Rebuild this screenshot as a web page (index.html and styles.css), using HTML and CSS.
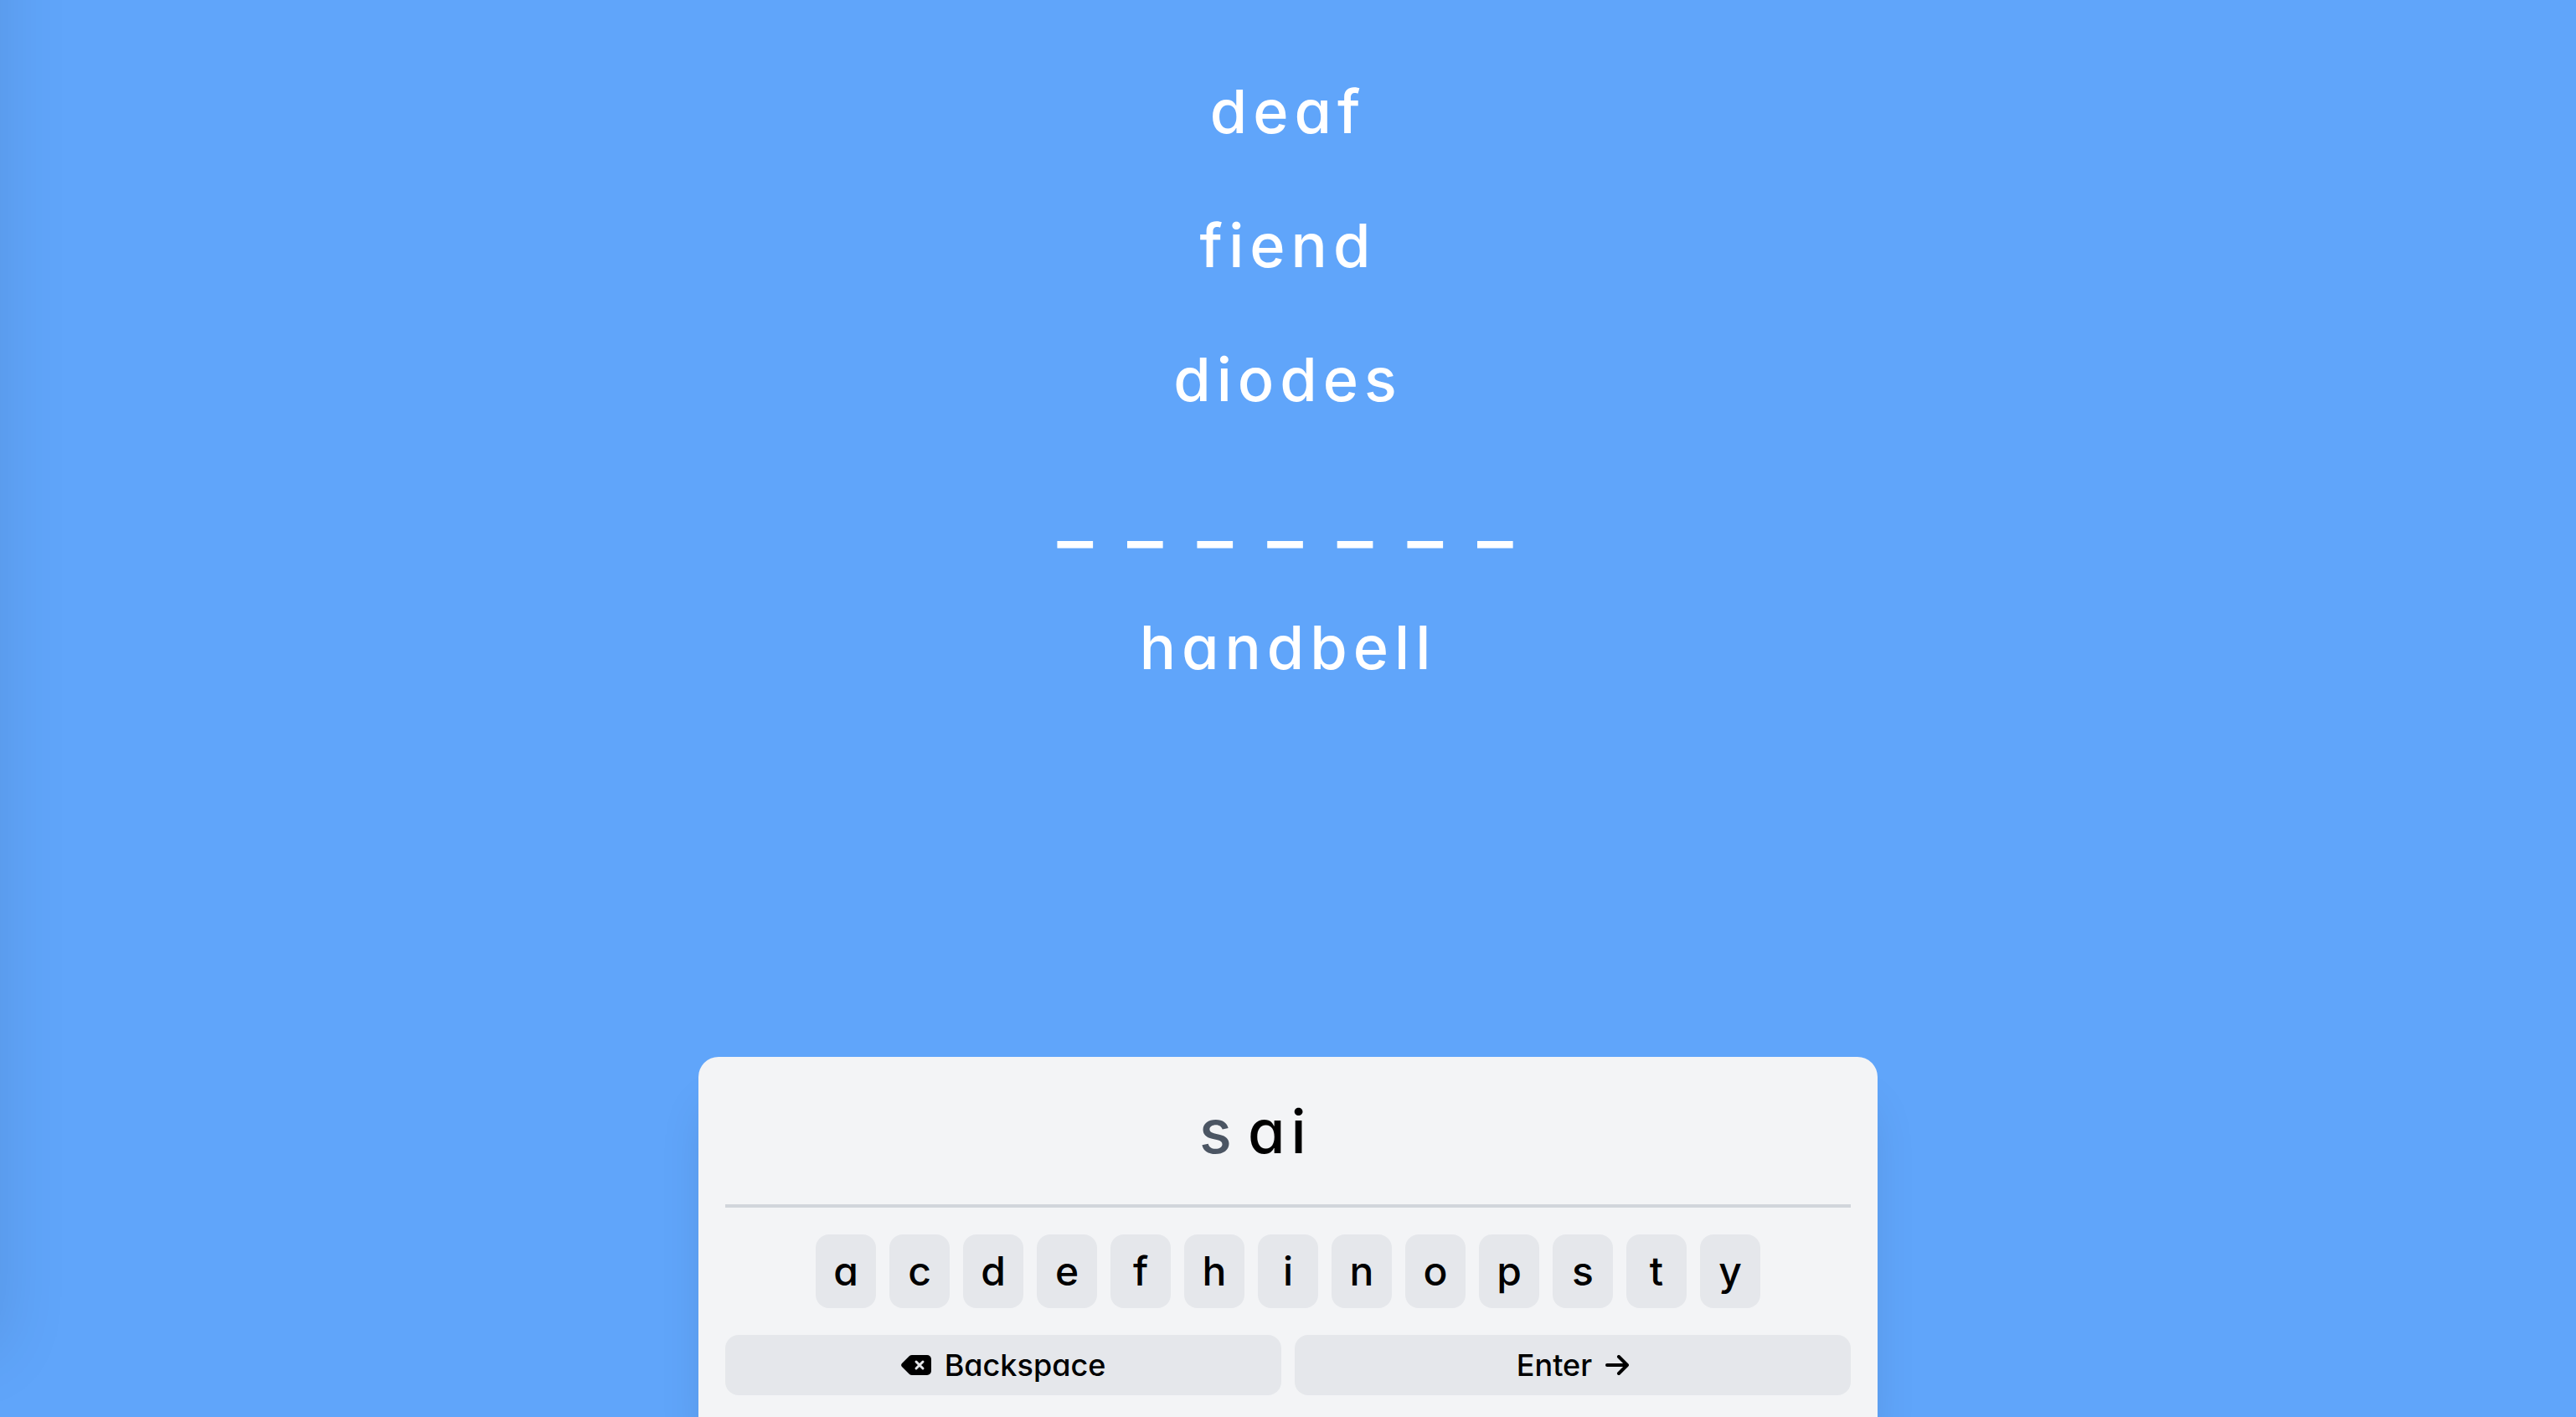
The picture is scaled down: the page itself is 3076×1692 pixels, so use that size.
FILE: index.html
```html
<!DOCTYPE html>
<html lang="en">
<head>
<meta charset="utf-8">
<meta name="viewport" content="width=device-width, initial-scale=1">
<title>Word ladder</title>
<link rel="stylesheet" href="styles.css">
</head>
<body>
<div class="game">
  <aside class="drawer" aria-hidden="true"></aside>
  <main class="board">
    <ol class="words">
      <li class="word">deaf</li>
      <li class="word">fiend</li>
      <li class="word">diodes</li>
      <li class="word blanks"><span>_</span><span>_</span><span>_</span><span>_</span><span>_</span><span>_</span><span>_</span></li>
      <li class="word">handbell</li>
    </ol>
  </main>
  <section class="panel" aria-label="Keyboard">
    <div class="entry">
      <label class="prefix" for="guess">s</label>
      <input class="guess" id="guess" type="text" value="ai" autocomplete="off" spellcheck="false">
    </div>
    <div class="keys">
      <button class="key" type="button">a</button>
      <button class="key" type="button">c</button>
      <button class="key" type="button">d</button>
      <button class="key" type="button">e</button>
      <button class="key" type="button">f</button>
      <button class="key" type="button">h</button>
      <button class="key" type="button">i</button>
      <button class="key" type="button">n</button>
      <button class="key" type="button">o</button>
      <button class="key" type="button">p</button>
      <button class="key" type="button">s</button>
      <button class="key" type="button">t</button>
      <button class="key" type="button">y</button>
    </div>
    <div class="actions">
      <button class="action" type="button">
        <svg class="icon-backspace" viewBox="0 0 36 24" aria-hidden="true">
          <path d="M13 0H31a5 5 0 0 1 5 5V19a5 5 0 0 1-5 5H13a5 5 0 0 1-3-1L1 14a3 3 0 0 1 0-4L10 1a5 5 0 0 1 3-1z" fill="currentColor"/>
          <path class="cross" d="M18 8l8 8M26 8l-8 8"/>
        </svg>
        Backspace
      </button>
      <button class="action" type="button">
        Enter
        <svg class="icon-arrow" viewBox="0 0 28 24" aria-hidden="true">
          <path d="M2 12H26M16 2l10 10-10 10"/>
        </svg>
      </button>
    </div>
  </section>
</div>
</body>
</html>
```
FILE: styles.css
```css
* {
  box-sizing: border-box;
}

body {
  margin: 0;
  background: #60a5fa;
  color: #000;
  font-family: Inter, "Liberation Sans", sans-serif;
  font-weight: 500;
  font-feature-settings: "cv11", "ss03";
}

.game {
  position: relative;
  display: flex;
  flex-direction: column;
  min-height: 100vh;
  overflow: hidden;
}

/* Closed menu, parked outside the left edge; only its shadow shows. */
.drawer {
  position: absolute;
  top: -100px;
  bottom: 80px;
  right: 100%;
  width: 640px;
  box-shadow: 0 0 80px rgba(0, 0, 0, 0.1);
}

.board {
  flex: 1;
  padding-top: 93px;
}

.words {
  display: flex;
  flex-direction: column;
  gap: 80px;
  margin: 0;
  padding: 0;
  list-style: none;
}

.word {
  color: #fff;
  font-size: 72px;
  line-height: 80px;
  letter-spacing: 7px;
  text-align: center;
}

.blanks {
  display: flex;
  justify-content: center;
  gap: 34px;
  font-size: 92px;
}

.panel {
  width: 100%;
  max-width: 1408px;
  margin: 0 auto;
  padding: 32px 32px 26px;
  border-radius: 24px 24px 0 0;
  background: #f3f4f6;
  box-shadow: 0 50px 60px -12px rgba(0, 0, 0, 0.12);
}

.entry {
  display: flex;
  align-items: flex-start;
  justify-content: center;
  gap: 12px;
  height: 148px;
  padding-top: 17px;
  border-bottom: 4px solid #d1d5db;
  font-size: 72px;
  line-height: 80px;
  letter-spacing: 7px;
}

.prefix {
  color: #4b5563;
}

.guess {
  width: 154px;
  height: 80px;
  padding: 0;
  border: 0;
  outline: 0;
  background: transparent;
  color: inherit;
  font: inherit;
  font-feature-settings: inherit;
  letter-spacing: inherit;
}

.keys {
  display: flex;
  flex-wrap: wrap;
  justify-content: center;
  gap: 16px;
  margin: 32px 0;
}

.key,
.action {
  padding: 0;
  border: 0;
  border-radius: 16px;
  background: #e5e7eb;
  color: inherit;
  font: inherit;
  font-feature-settings: inherit;
  cursor: pointer;
}

.key {
  width: 72px;
  height: 88px;
  font-size: 48px;
  line-height: 64px;
}

.actions {
  display: grid;
  grid-template-columns: 1fr 1fr;
  gap: 16px;
}

.action {
  display: flex;
  align-items: center;
  justify-content: center;
  gap: 16px;
  height: 72px;
  font-size: 36px;
  line-height: 56px;
}

.icon-backspace {
  width: 36px;
  height: 24px;
}

.icon-arrow {
  width: 28px;
  height: 24px;
}

.icon-arrow path,
.cross {
  fill: none;
  stroke: currentColor;
  stroke-width: 4;
  stroke-linecap: round;
  stroke-linejoin: round;
}

.cross {
  stroke: #e5e7eb;
  stroke-width: 3;
}
```
